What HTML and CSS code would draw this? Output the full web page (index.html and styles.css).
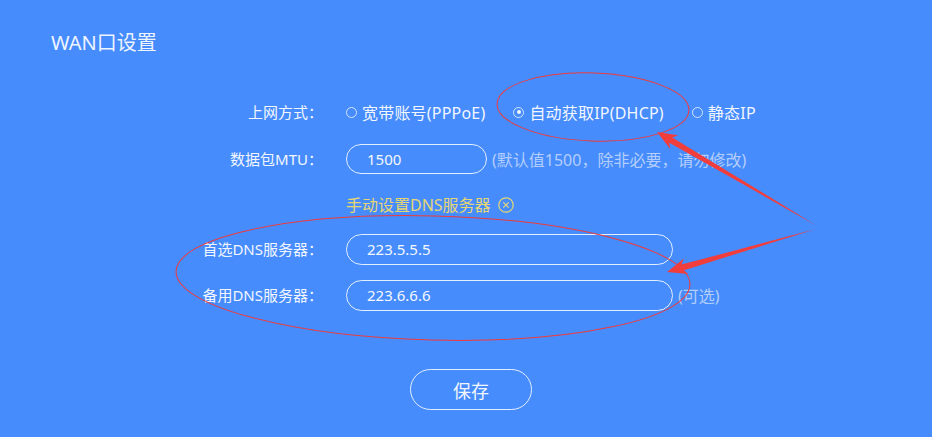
FILE: index.html
```html
<!DOCTYPE html>
<html lang="zh-CN">
<head>
<meta charset="utf-8">
<title>WAN口设置</title>
<link rel="stylesheet" href="styles.css">
</head>
<body>
<div class="page">
  <h1 class="title">WAN口设置</h1>
  <div class="form">
    <div class="lbl">上网方式<span class="colon">：</span></div>
    <div class="ctl radios">
      <span class="radio"><span class="dot"></span>宽带账号(PPPoE)</span>
      <span class="radio"><span class="dot on"></span>自动获取IP(DHCP)</span>
      <span class="radio"><span class="dot"></span>静态IP</span>
    </div>

    <div class="lbl">数据包MTU<span class="colon">：</span></div>
    <div class="ctl">
      <div class="field short">1500</div>
      <span class="hint">(默认值1500，除非必要，请勿修改)</span>
    </div>

    <div class="lbl"></div>
    <div class="ctl">
      <span class="dns-toggle">手动设置DNS服务器
        <svg class="xicon" width="16" height="16" viewBox="0 0 16 16"><circle cx="8" cy="8" r="7.2" fill="none" stroke="currentColor" stroke-width="1.2"/><path d="M5.3 5.3 L10.7 10.7 M10.7 5.3 L5.3 10.7" stroke="currentColor" stroke-width="1.2" fill="none"/></svg>
      </span>
    </div>

    <div class="lbl">首选DNS服务器<span class="colon">：</span></div>
    <div class="ctl">
      <div class="field long">223.5.5.5</div>
    </div>

    <div class="lbl">备用DNS服务器<span class="colon">：</span></div>
    <div class="ctl">
      <div class="field long">223.6.6.6</div>
      <span class="hint opt">(可选)</span>
    </div>
  </div>
  <div class="actions">
    <button class="save">保存</button>
  </div>

  <svg class="annot" width="932" height="437" viewBox="0 0 932 437">
    <ellipse cx="593" cy="107" rx="96" ry="34" transform="rotate(2 593 107)" fill="none" stroke="#ee3b3b" stroke-width="1"/>
    <ellipse cx="433" cy="278" rx="257" ry="62" transform="rotate(1.5 433 278)" fill="none" stroke="#ee3b3b" stroke-width="1"/>
    <polygon points="817,226 672.3,137.5 678.3,135.2 657,132 670.2,149 669.3,142.7" fill="#f23d3d"/>
    <polygon points="816,229 683.3,270.4 688.5,274 667,272 683.9,258.6 681.5,264.6" fill="#f23d3d"/>
  </svg>
</div>
</body>
</html>
```
FILE: styles.css
```css
html, body {
  margin: 0;
  padding: 0;
  background: #468cfd;
}
body {
  font-family: "Noto Sans", "Noto Sans CJK SC", sans-serif;
  color: #f2f6ff;
}
.page {
  position: relative;
  width: 932px;
  height: 437px;
  overflow: hidden;
  padding-top: 29px;
  box-sizing: border-box;
}
.title {
  margin: 0 0 0 51px;
  font-size: 20px;
  font-weight: 400;
  line-height: 28px;
  color: #eef4ff;
}
.form {
  margin-top: 32px;
  display: grid;
  grid-template-columns: 323px 1fr;
  grid-template-rows: 46px 48px 42px 48px 44px;
  column-gap: 23px;
  align-items: center;
}
.lbl {
  text-align: right;
  font-size: 15px;
  line-height: 20px;
  color: #f2f6ff;
}
.colon {
  font-family: "Noto Sans CJK JP", "Noto Sans CJK TC", sans-serif;
}
.ctl {
  display: flex;
  align-items: center;
  font-size: 16px;
}
.radios {
  gap: 28px;
}
.radio {
  display: inline-flex;
  align-items: center;
  gap: 5px;
  font-size: 16px;
  letter-spacing: 0.2px;
  color: #f2f6ff;
}
.dot {
  width: 11px;
  height: 11px;
  box-sizing: border-box;
  border: 1px solid rgba(255,255,255,0.75);
  border-radius: 50%;
  display: inline-flex;
  align-items: center;
  justify-content: center;
}
.dot.on::after {
  content: "";
  width: 4px;
  height: 4px;
  border-radius: 50%;
  background: #f2f6ff;
}
.field {
  box-sizing: border-box;
  height: 30px;
  border: 1px solid rgba(255,255,255,0.85);
  border-radius: 15px;
  padding-left: 20px;
  font-size: 15px;
  line-height: 28px;
  color: #f4f8ff;
}
.field.short { width: 141px; }
.field.long { width: 327px; height: 31px; line-height: 29px; border-radius: 16px; }
.hint {
  margin-left: 5px;
  font-size: 16px;
  color: #b3cefc;
}
.hint.opt { margin-left: 5px; }
.dns-toggle {
  display: inline-flex;
  align-items: center;
  gap: 7px;
  font-size: 16px;
  color: #e6d673;
}
.xicon { display: block; margin-top: 1px; }
.actions {
  margin-top: 52px;
  padding-left: 410px;
}
.save {
  width: 122px;
  height: 41px;
  border: 1px solid rgba(255,255,255,0.85);
  border-radius: 21px;
  background: transparent;
  color: #f2f6ff;
  font-family: "Noto Sans CJK SC", sans-serif;
  font-size: 18px;
  padding: 0;
}
.annot {
  position: absolute;
  left: 0;
  top: 0;
  pointer-events: none;
}
```
